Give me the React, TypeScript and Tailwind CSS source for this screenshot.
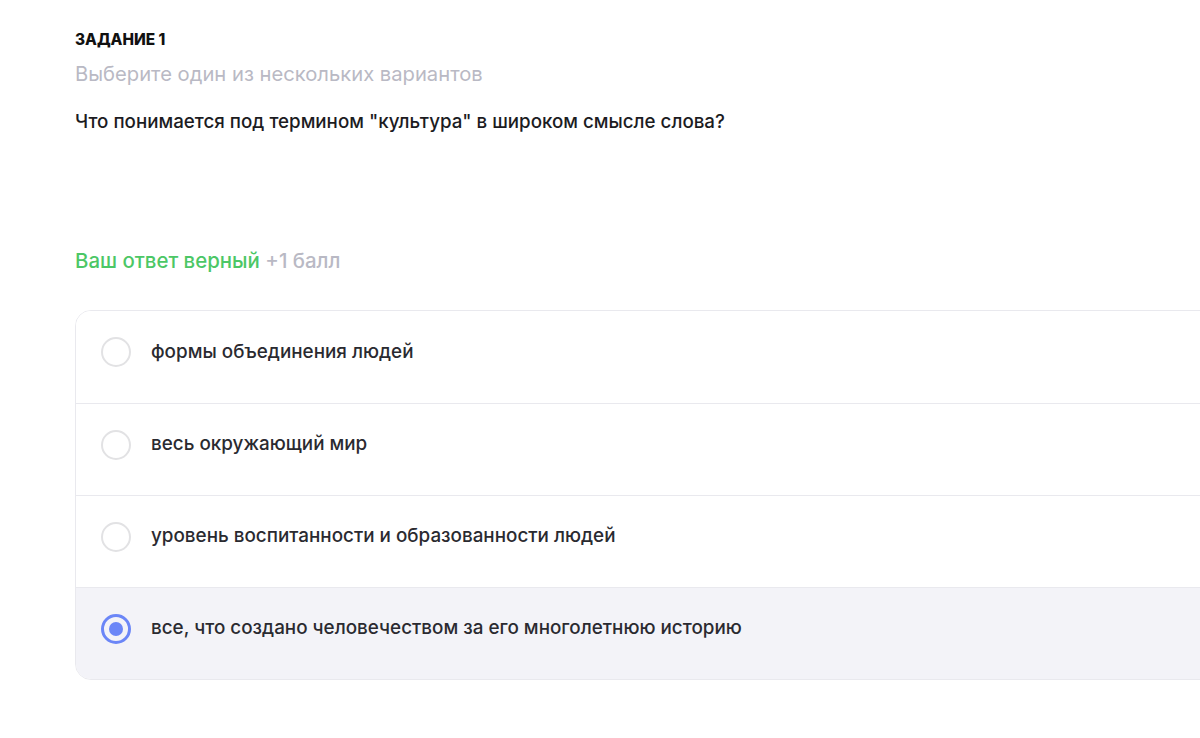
import React from "react";

const options = [
  "формы объединения людей",
  "весь окружающий мир",
  "уровень воспитанности и образованности людей",
  "все, что создано человечеством за его многолетнюю историю",
];

const selected = 3;

const Radio: React.FC<{ checked: boolean }> = ({ checked }) =>
  checked ? (
    <div className="w-[30px] h-[30px] rounded-full border-[3px] border-[#6b86f7] flex items-center justify-center shrink-0">
      <div className="w-[14px] h-[14px] rounded-full bg-[#6b86f7]" />
    </div>
  ) : (
    <div className="w-[30px] h-[30px] rounded-full border-2 border-[#e2e2e4] bg-white shrink-0" />
  );

export default function App() {
  return (
    <div
      className="w-[1200px] h-[738px] overflow-hidden bg-white"
      style={{ fontFamily: "Inter, 'Noto Sans', sans-serif" }}
    >
      <div className="pl-[75px] pt-[31px]">
        <div className="text-[15.4px] font-extrabold text-[#111] leading-[18px]">
          ЗАДАНИЕ 1
        </div>
        <div className="mt-[11px] text-[20.2px] text-[#b9b9c4] leading-[28px]">
          Выберите один из нескольких вариантов
        </div>
        <div className="mt-[21px] text-[18.75px] font-medium text-[#1c1c1f] leading-[26px]">
          Что понимается под термином "культура" в широком смысле слова?
        </div>
        <div className="mt-[112px] text-[20.4px] font-medium leading-[28px]">
          <span className="text-[#4cc766]">Ваш ответ верный</span>{" "}
          <span className="text-[#b9b9c4]">+1 балл</span>
        </div>
        <div className="mt-[35px] w-[1180px] rounded-[16px] border border-[#e9e9ee] overflow-hidden">
          {options.map((o, i) => (
            <div
              key={i}
              className={
                "h-[92px] flex items-center gap-[20px] pl-[25px] pb-[10px] " +
                (i > 0 ? "border-t border-[#e9e9ee] " : "") +
                (i === selected ? "bg-[#f3f3f8]" : "bg-white")
              }
            >
              <Radio checked={i === selected} />
              <span className="text-[18.85px] font-medium text-[#2a2a30]">{o}</span>
            </div>
          ))}
        </div>
      </div>
    </div>
  );
}
